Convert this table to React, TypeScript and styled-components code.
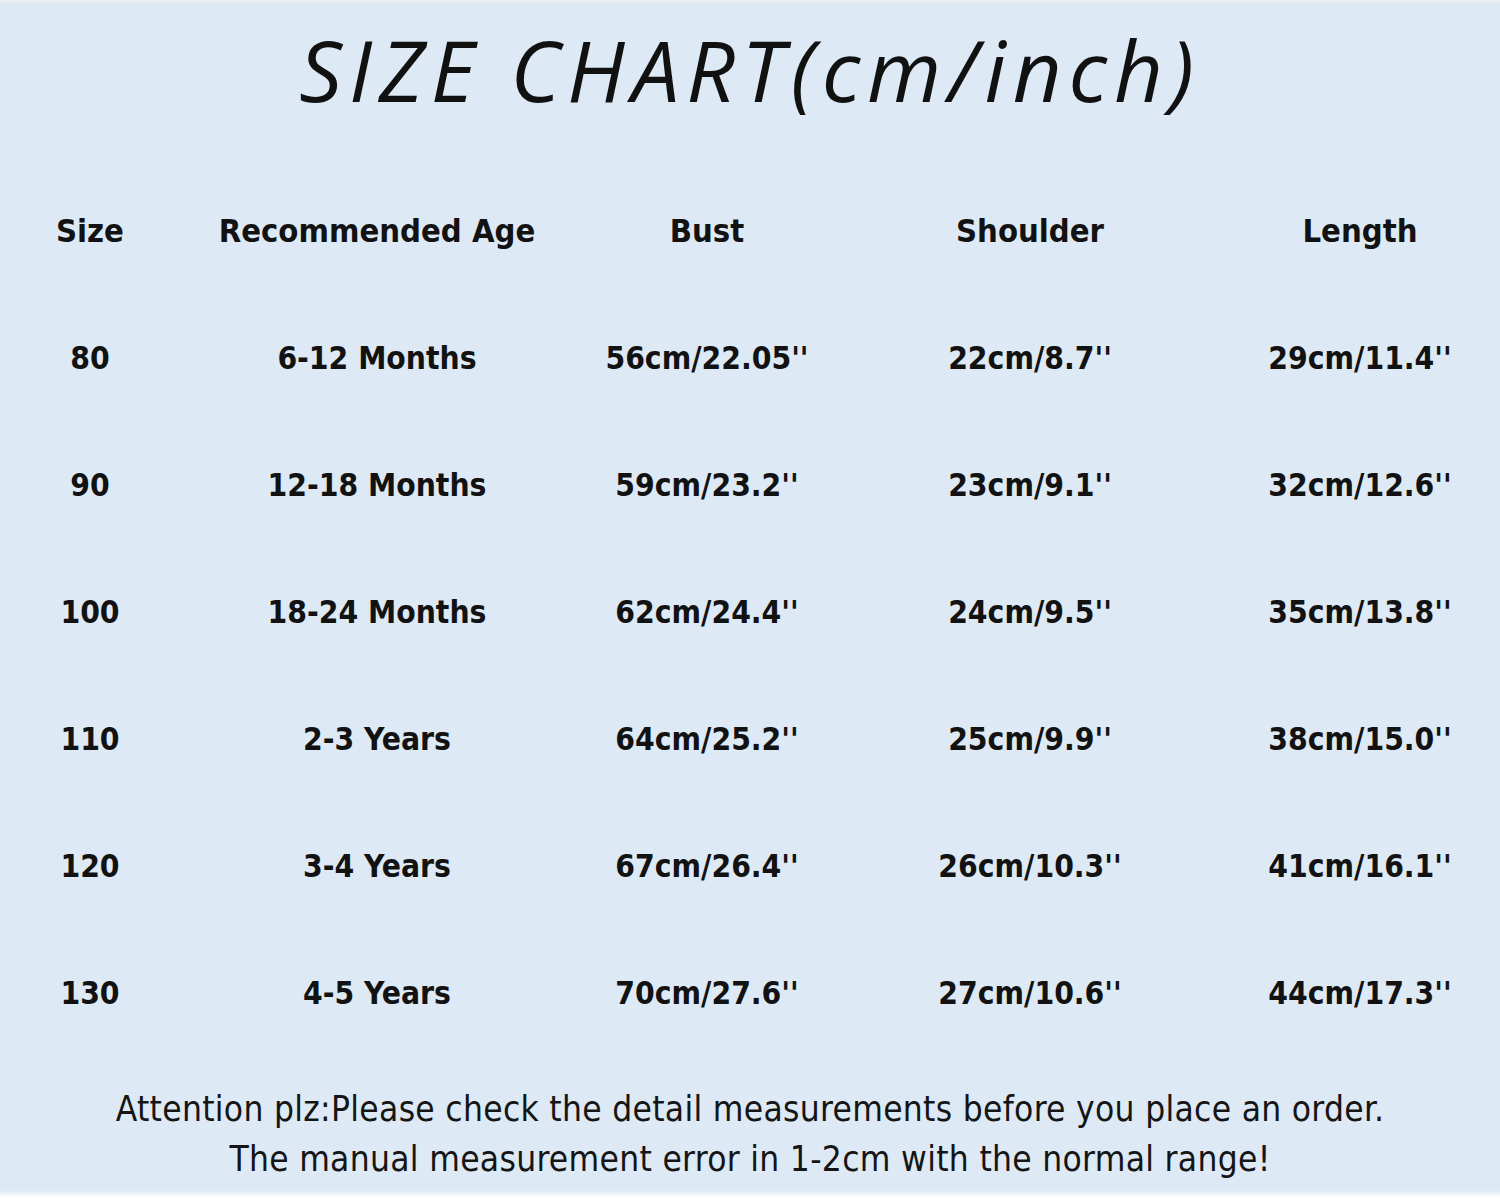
import React from "react";
import styled, { createGlobalStyle } from "styled-components";

const Global = createGlobalStyle`
  html, body { margin: 0; padding: 0; background: #ffffff; }
  #root { width: 1500px; height: 1198px; }
`;

const Page = styled.div`
  width: 1500px;
  height: 1198px;
  box-sizing: border-box;
  background: #dde9f4;
  border-top: 3px solid #eaeef3;
  display: flex;
  flex-direction: column;
  position: relative;
  overflow: hidden;
  &::after {
    content: "";
    position: absolute;
    left: 0;
    right: 0;
    bottom: 0;
    height: 8px;
    background: linear-gradient(#dde9f4, #ffffff);
  }
`;

const Title = styled.h1`
  margin: 0;
  height: 165px;
  display: flex;
  align-items: center;
  justify-content: center;
  padding-bottom: 34px;
  box-sizing: border-box;
  font-family: "Open Sans", "DejaVu Sans", sans-serif;
  font-style: italic;
  font-weight: 400;
  font-size: 85px;
  letter-spacing: 6.8px;
  color: #111111;
`;

const Table = styled.div`
  display: grid;
  grid-template-columns: 180px 394px 266px 380px 280px;
  grid-auto-rows: 127px;
  grid-template-rows: 126px;
`;

const Cell = styled.div<{ $head?: boolean }>`
  display: flex;
  align-items: center;
  justify-content: center;
  font-family: "DejaVu Sans Condensed", "DejaVu Sans", sans-serif;
  font-weight: bold;
  font-size: ${(p) => (p.$head ? "32.5px" : "31.5px")};
  color: #121212;
  white-space: nowrap;
`;

const Footer = styled.div`
  margin-top: 28px;
  display: flex;
  flex-direction: column;
  align-items: center;
  font-family: "DejaVu Sans Condensed", "DejaVu Sans", sans-serif;
  font-size: 35px;
  letter-spacing: 0.3px;
  line-height: 50px;
  color: #151515;
`;

const Line = styled.div`
  white-space: nowrap;
`;

const headers = ["Size", "Recommended Age", "Bust", "Shoulder", "Length"];
const rows = [
  ["80", "6-12 Months", "56cm/22.05''", "22cm/8.7''", "29cm/11.4''"],
  ["90", "12-18 Months", "59cm/23.2''", "23cm/9.1''", "32cm/12.6''"],
  ["100", "18-24 Months", "62cm/24.4''", "24cm/9.5''", "35cm/13.8''"],
  ["110", "2-3 Years", "64cm/25.2''", "25cm/9.9''", "38cm/15.0''"],
  ["120", "3-4 Years", "67cm/26.4''", "26cm/10.3''", "41cm/16.1''"],
  ["130", "4-5 Years", "70cm/27.6''", "27cm/10.6''", "44cm/17.3''"],
];

export default function App() {
  return (
    <>
      <Global />
      <Page>
        <Title>SIZE CHART(cm/inch)</Title>
        <Table>
          {headers.map((h) => (
            <Cell key={h} $head>
              {h}
            </Cell>
          ))}
          {rows.map((r) =>
            r.map((c, i) => <Cell key={r[0] + "-" + i}>{c}</Cell>)
          )}
        </Table>
        <Footer>
          <Line>Attention plz:Please check the detail measurements before you place an order.</Line>
          <Line>The manual measurement error in 1-2cm with the normal range!</Line>
        </Footer>
      </Page>
    </>
  );
}
